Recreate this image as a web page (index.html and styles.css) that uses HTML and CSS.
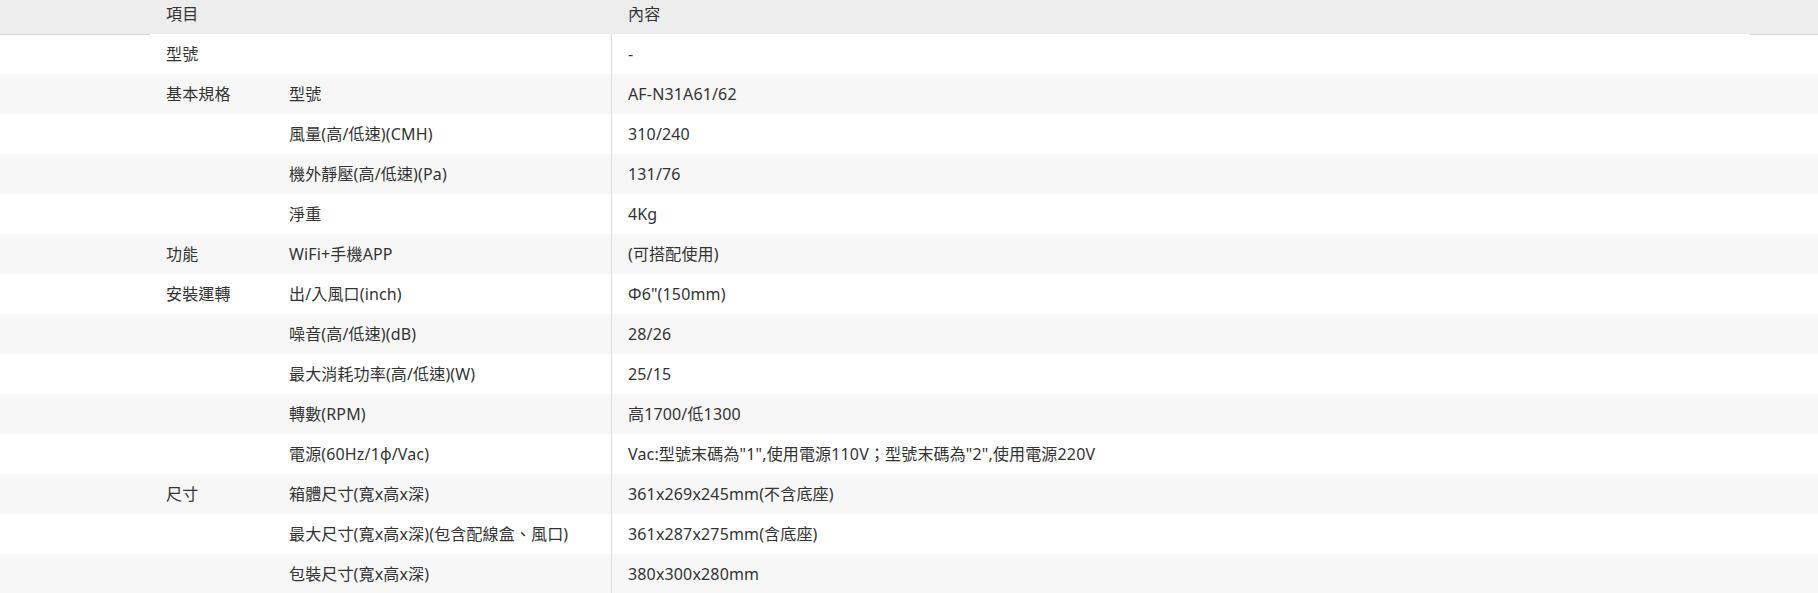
FILE: index.html
```html
<!DOCTYPE html>
<html lang="zh-Hant">
<head>
<meta charset="utf-8">
<title>規格表</title>
<link rel="stylesheet" href="styles.css">
</head>
<body>
<div class="spec">
  <div class="row head">
    <div class="pad"></div>
    <div class="c1">項目</div>
    <div class="c2"></div>
    <div class="c3">內容</div>
    <div class="pad"></div>
  </div>
  <div class="row">
    <div class="pad"></div><div class="c1">型號</div><div class="c2"></div><div class="c3">-</div><div class="pad"></div>
  </div>
  <div class="row">
    <div class="pad"></div><div class="c1">基本規格</div><div class="c2">型號</div><div class="c3">AF-N31A61/62</div><div class="pad"></div>
  </div>
  <div class="row">
    <div class="pad"></div><div class="c1"></div><div class="c2">風量(高/低速)(CMH)</div><div class="c3">310/240</div><div class="pad"></div>
  </div>
  <div class="row">
    <div class="pad"></div><div class="c1"></div><div class="c2">機外靜壓(高/低速)(Pa)</div><div class="c3">131/76</div><div class="pad"></div>
  </div>
  <div class="row">
    <div class="pad"></div><div class="c1"></div><div class="c2">淨重</div><div class="c3">4Kg</div><div class="pad"></div>
  </div>
  <div class="row">
    <div class="pad"></div><div class="c1">功能</div><div class="c2">WiFi+手機APP</div><div class="c3">(可搭配使用)</div><div class="pad"></div>
  </div>
  <div class="row">
    <div class="pad"></div><div class="c1">安裝運轉</div><div class="c2">出/入風口(inch)</div><div class="c3">Φ6"(150mm)</div><div class="pad"></div>
  </div>
  <div class="row">
    <div class="pad"></div><div class="c1"></div><div class="c2">噪音(高/低速)(dB)</div><div class="c3">28/26</div><div class="pad"></div>
  </div>
  <div class="row">
    <div class="pad"></div><div class="c1"></div><div class="c2">最大消耗功率(高/低速)(W)</div><div class="c3">25/15</div><div class="pad"></div>
  </div>
  <div class="row">
    <div class="pad"></div><div class="c1"></div><div class="c2">轉數(RPM)</div><div class="c3">高1700/低1300</div><div class="pad"></div>
  </div>
  <div class="row">
    <div class="pad"></div><div class="c1"></div><div class="c2">電源(60Hz/1φ/Vac)</div><div class="c3">Vac:型號末碼為"1",使用電源110V；型號末碼為"2",使用電源220V</div><div class="pad"></div>
  </div>
  <div class="row">
    <div class="pad"></div><div class="c1">尺寸</div><div class="c2">箱體尺寸(寬x高x深)</div><div class="c3">361x269x245mm(不含底座)</div><div class="pad"></div>
  </div>
  <div class="row">
    <div class="pad"></div><div class="c1"></div><div class="c2">最大尺寸(寬x高x深)(包含配線盒、風口)</div><div class="c3">361x287x275mm(含底座)</div><div class="pad"></div>
  </div>
  <div class="row">
    <div class="pad"></div><div class="c1"></div><div class="c2">包裝尺寸(寬x高x深)</div><div class="c3">380x300x280mm</div><div class="pad"></div>
  </div>
</div>
</body>
</html>
```
FILE: styles.css
```css
html, body {
  margin: 0;
  padding: 0;
  background: #ffffff;
}

body {
  font-family: "Noto Sans", "Noto Sans CJK TC", sans-serif;
  font-size: 16px;
  letter-spacing: 0.15px;
  color: #333333;
  overflow: hidden;
}

.spec {
  display: flex;
  flex-direction: column;
}

.row {
  display: grid;
  grid-template-columns: 150px 123px 338px 1fr 69px;
  height: 40px;
  line-height: 40px;
  background: #ffffff;
}

.row:nth-child(odd) {
  background: #f7f7f7;
}

.row.head {
  height: 34px;
  line-height: 28px;
  background: #ededed;
  position: relative;
  z-index: 1;
}

.row.head .pad {
  box-shadow: 0 1px 0 #dadada;
}

.c1, .c2, .c3 {
  padding-left: 16px;
  white-space: nowrap;
}

.c3 {
  border-left: 1px solid #dddddd;
  padding-left: 16px;
}

.row.head .c3 {
  border-left: none;
  padding-left: 17px;
}
```
